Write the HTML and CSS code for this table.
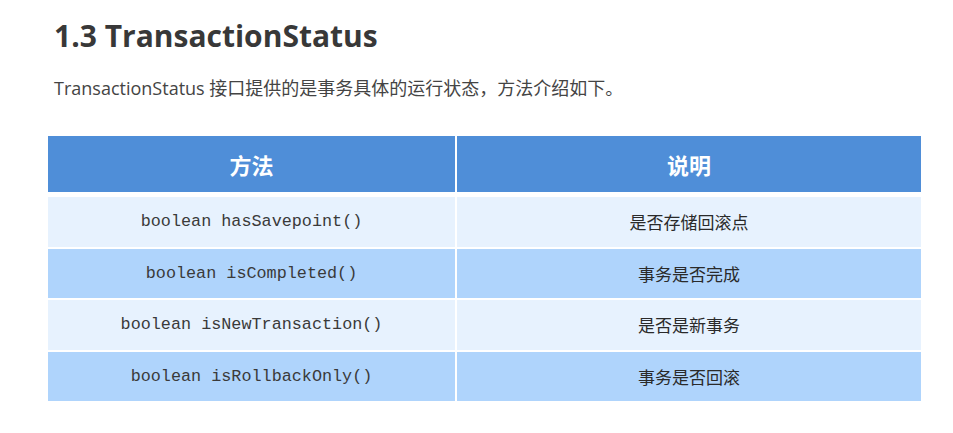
FILE: index.html
```html
<!DOCTYPE html>
<html lang="zh-CN">
<head>
<meta charset="utf-8">
<link rel="stylesheet" href="styles.css">
</head>
<body>
<div class="page">
  <h1 class="title">1.3 TransactionStatus</h1>
  <p class="intro">TransactionStatus 接口提供的是事务具体的运行状态，方法介绍如下。</p>
  <div class="table">
    <div class="head">
      <div class="th">方法</div>
      <div class="th">说明</div>
    </div>
    <div class="body">
      <div class="row light"><div class="td code">boolean hasSavepoint()</div><div class="td">是否存储回滚点</div></div>
      <div class="row dark"><div class="td code">boolean isCompleted()</div><div class="td">事务是否完成</div></div>
      <div class="row light"><div class="td code">boolean isNewTransaction()</div><div class="td">是否是新事务</div></div>
      <div class="row dark"><div class="td code">boolean isRollbackOnly()</div><div class="td">事务是否回滚</div></div>
    </div>
  </div>
</div>
</body>
</html>
```
FILE: styles.css
```css
html, body {
  margin: 0;
  padding: 0;
  background: #ffffff;
}
.page {
  padding: 16px 32px 0 48px;
  font-family: "Open Sans", "Noto Sans CJK SC", sans-serif;
  color: #333333;
}
.title {
  margin: 0 0 0 6px;
  font-size: 30px;
  font-weight: 700;
  line-height: 40px;
  color: #383838;
}
.intro {
  margin: 19px 0 0 6px;
  font-size: 18px;
  line-height: 26px;
  color: #444444;
}
.table {
  margin-top: 35px;
  width: 873px;
}
.head, .row {
  display: grid;
  grid-template-columns: 407px 464px;
  column-gap: 2px;
}
.head {
  height: 56px;
  background: #ffffff;
}
.th {
  background: #4f8ed8;
  color: #ffffff;
  font-family: "Noto Sans CJK SC", sans-serif;
  font-weight: 700;
  font-size: 22px;
  display: flex;
  align-items: center;
  justify-content: center;
}
.body {
  margin-top: 5px;
  display: flex;
  flex-direction: column;
  gap: 2px;
}
.row {
  height: 49.5px;
}
.td {
  display: flex;
  align-items: center;
  justify-content: center;
  font-family: "Noto Sans CJK SC", sans-serif;
  font-size: 17px;
  color: #2a2a2a;
}
.code {
  font-family: "Liberation Mono", "Courier New", monospace;
  font-size: 16.8px;
  color: #3a3a3a;
}
.light .td { background: #e7f2fe; }
.dark .td { background: #afd4fc; }
```
